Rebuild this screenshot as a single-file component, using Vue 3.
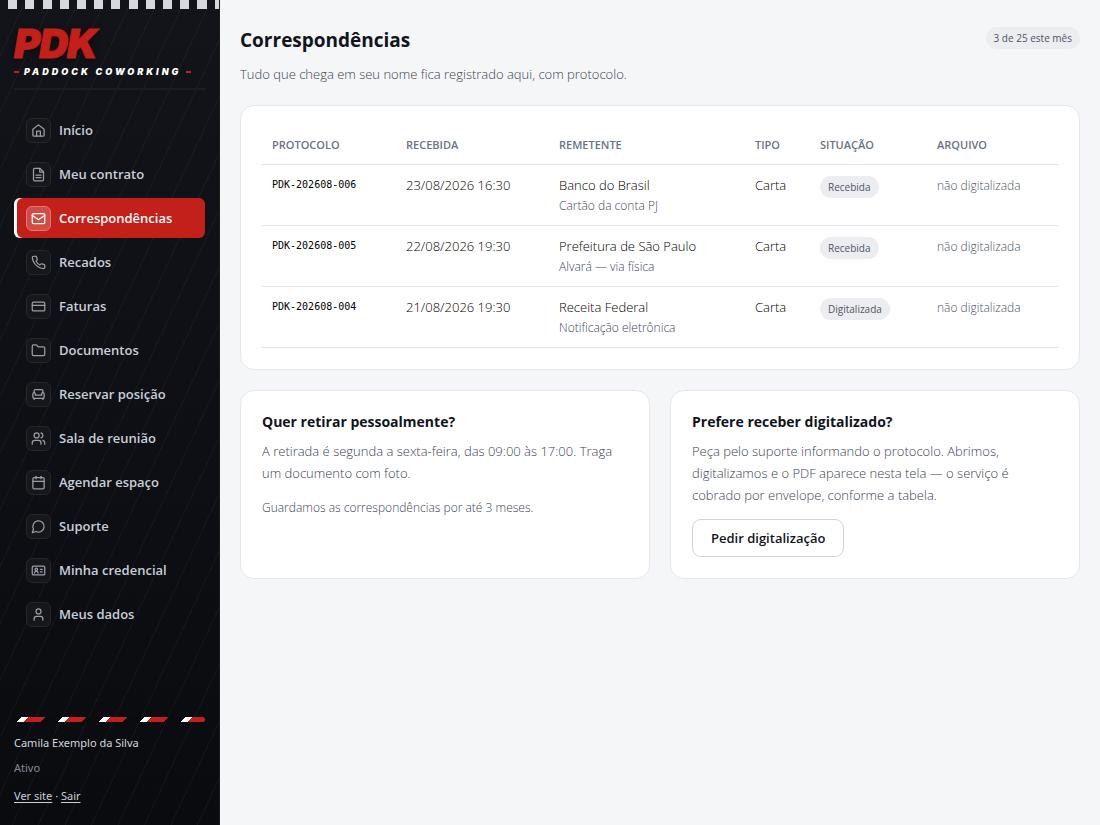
<script setup>
const nav = [
  { label: 'Início', d: ['m3 10 9-7 9 7v9a2 2 0 0 1-2 2H5a2 2 0 0 1-2-2z', 'M9 21v-8h6v8'] },
  { label: 'Meu contrato', d: ['M14 2H6a2 2 0 0 0-2 2v16a2 2 0 0 0 2 2h12a2 2 0 0 0 2-2V8z', 'M14 2v6h6', 'M8 13h8', 'M8 17h8'] },
  { label: 'Correspondências', active: true, d: ['M4 4h16a2 2 0 0 1 2 2v12a2 2 0 0 1-2 2H4a2 2 0 0 1-2-2V6a2 2 0 0 1 2-2z', 'm22 7-10 7L2 7'] },
  { label: 'Recados', d: ['M22 16.92v3a2 2 0 0 1-2.18 2 19.79 19.79 0 0 1-8.63-3.07 19.5 19.5 0 0 1-6-6 19.79 19.79 0 0 1-3.07-8.67A2 2 0 0 1 4.11 2h3a2 2 0 0 1 2 1.72c.13.96.36 1.9.7 2.81a2 2 0 0 1-.45 2.11L8.09 9.91a16 16 0 0 0 6 6l1.27-1.27a2 2 0 0 1 2.11-.45c.9.34 1.85.57 2.81.7A2 2 0 0 1 22 16.92z'] },
  { label: 'Faturas', d: ['M4 5h16a2 2 0 0 1 2 2v10a2 2 0 0 1-2 2H4a2 2 0 0 1-2-2V7a2 2 0 0 1 2-2z', 'M2 10h20'] },
  { label: 'Documentos', d: ['M20 20a2 2 0 0 0 2-2V8a2 2 0 0 0-2-2h-7.9a2 2 0 0 1-1.69-.9L9.6 3.9A2 2 0 0 0 7.93 3H4a2 2 0 0 0-2 2v13a2 2 0 0 0 2 2z'] },
  { label: 'Reservar posição', d: ['M19 9V6a2 2 0 0 0-2-2H7a2 2 0 0 0-2 2v3', 'M3 16a2 2 0 0 0 2 2h14a2 2 0 0 0 2-2v-5a2 2 0 0 0-4 0v2H7v-2a2 2 0 0 0-4 0z', 'M5 18v2', 'M19 18v2'] },
  { label: 'Sala de reunião', d: ['M16 21v-2a4 4 0 0 0-4-4H6a4 4 0 0 0-4 4v2', 'M13 7a4 4 0 1 1-8 0 4 4 0 0 1 8 0z', 'M22 21v-2a4 4 0 0 0-3-3.87', 'M16 3.13a4 4 0 0 1 0 7.75'] },
  { label: 'Agendar espaço', d: ['M5 4h14a2 2 0 0 1 2 2v14a2 2 0 0 1-2 2H5a2 2 0 0 1-2-2V6a2 2 0 0 1 2-2z', 'M16 2v4', 'M8 2v4', 'M3 10h18'] },
  { label: 'Suporte', d: ['M7.9 20A9 9 0 1 0 4 16.1L2 22z'] },
  { label: 'Minha credencial', d: ['M4 5h16a2 2 0 0 1 2 2v10a2 2 0 0 1-2 2H4a2 2 0 0 1-2-2V7a2 2 0 0 1 2-2z', 'M10.5 10a2 2 0 1 1-4 0 2 2 0 0 1 4 0z', 'M5.5 16c.5-2 1.5-3 3-3s2.500 1 3 3', 'M15 10h3', 'M15 14h3'] },
  { label: 'Meus dados', d: ['M19 21v-2a4 4 0 0 0-4-4H9a4 4 0 0 0-4 4v2', 'M16 7a4 4 0 1 1-8 0 4 4 0 0 1 8 0z'] },
]
const rows = [
  { id: 'PDK-202608-006', date: '23/08/2026 16:30', from: 'Banco do Brasil', note: 'Cartão da conta PJ', status: 'Recebida' },
  { id: 'PDK-202608-005', date: '22/08/2026 19:30', from: 'Prefeitura de São Paulo', note: 'Alvará — via física', status: 'Recebida' },
  { id: 'PDK-202608-004', date: '21/08/2026 19:30', from: 'Receita Federal', note: 'Notificação eletrônica', status: 'Digitalizada' },
]
</script>

<template>
  <div class="shell">
    <aside class="side">
      <div class="brand">
        <div class="logo">PDK</div>
        <div class="tagline">Paddock Coworking</div>
      </div>
      <nav class="nav">
        <a v-for="n in nav" :key="n.label" href="#" :class="{ active: n.active }">
          <span class="ico">
            <svg viewBox="0 0 24 24" aria-hidden="true"><path v-for="p in n.d" :key="p" :d="p" /></svg>
          </span>
          {{ n.label }}
        </a>
      </nav>
      <div class="foot">
        <div class="kerb"></div>
        <div class="user">Camila Exemplo da Silva</div>
        <div class="state">Ativo</div>
        <div class="links"><a href="#">Ver site</a> · <a href="#">Sair</a></div>
      </div>
    </aside>
    <main class="main">
      <header class="head">
        <div>
          <h1>Correspondências</h1>
          <p>Tudo que chega em seu nome fica registrado aqui, com protocolo.</p>
        </div>
        <span class="badge">3 de 25 este mês</span>
      </header>
      <section class="card">
        <table>
          <thead>
            <tr>
              <th class="c1">Protocolo</th>
              <th class="c2">Recebida</th>
              <th class="c3">Remetente</th>
              <th class="c4">Tipo</th>
              <th class="c5">Situação</th>
              <th>Arquivo</th>
            </tr>
          </thead>
          <tbody>
            <tr v-for="r in rows" :key="r.id">
              <td class="code"><code>{{ r.id }}</code></td>
              <td>{{ r.date }}</td>
              <td>{{ r.from }}<small>{{ r.note }}</small></td>
              <td>Carta</td>
              <td class="status"><span class="badge">{{ r.status }}</span></td>
              <td><span class="muted">não digitalizada</span></td>
            </tr>
          </tbody>
        </table>
      </section>
      <div class="pair">
        <section class="card">
          <h2>Quer retirar pessoalmente?</h2>
          <p>A retirada é segunda a sexta-feira, das 09:00 às 17:00. Traga um documento com foto.</p>
          <p class="hint">Guardamos as correspondências por até 3 meses.</p>
        </section>
        <section class="card">
          <h2>Prefere receber digitalizado?</h2>
          <p>Peça pelo suporte informando o protocolo. Abrimos, digitalizamos e o PDF aparece nesta tela — o serviço é cobrado por envelope, conforme a tabela.</p>
          <button type="button">Pedir digitalização</button>
        </section>
      </div>
    </main>
  </div>
</template>

<style>
body { background: #f4f6f8; }
</style>

<style scoped>
* { box-sizing: border-box; }
h1, h2, p { margin: 0; }
.shell {
  display: grid;
  grid-template-columns: 220px 1fr;
  min-height: 100vh;
  font-family: "Open Sans", "Noto Sans", sans-serif;
  font-size: 13px;
  color: #12141c;
}
.side {
  display: flex;
  flex-direction: column;
  padding: 0 14px 21px;
  border-right: 1px solid #1a1c21;
  color: #c9ced8;
  background:
    repeating-linear-gradient(90deg, transparent 0 3.7%, #d5d8de 3.7% 7.86%) 0 0 / 100% 9px no-repeat,
    repeating-linear-gradient(115deg, transparent 0 23px, rgba(255, 255, 255, 0.04) 23px 24px),
    linear-gradient(#12141a, #0a0b0f);
}
.brand {
  padding: 21px 0 11px;
  border-bottom: 2px solid #1b1d22;
  font-family: Inter, sans-serif;
  font-style: italic;
}
.logo {
  font-size: 40px;
  line-height: 46px;
  font-weight: 900;
  color: #c4201a;
  letter-spacing: -1px;
  -webkit-text-stroke: 1px #c4201a;
  text-shadow: 0 2px 6px rgba(0, 0, 0, 0.5);
}
.tagline {
  display: flex;
  align-items: center;
  gap: 5px;
  font-size: 9px;
  line-height: 10px;
  font-weight: 900;
  letter-spacing: 3px;
  text-transform: uppercase;
  color: #fff;
}
.tagline::before, .tagline::after { content: ""; width: 5px; height: 2px; background: #c4201a; }
.nav { display: grid; gap: 4px; padding-top: 20px; }
.nav a {
  display: flex;
  align-items: center;
  gap: 8px;
  height: 40px;
  padding: 0 12px;
  border-radius: 6px;
  font-weight: 600;
  color: #c9ced8;
  text-decoration: none;
}
.nav a.active { background: #c4201a; color: #fff; box-shadow: inset 3px 0 #fff; }
.ico {
  display: grid;
  place-items: center;
  width: 25px;
  height: 25px;
  border: 1px solid #25272c;
  border-radius: 6px;
  background: #15171b;
  color: #9a9ea8;
}
.active .ico { background: #d04c47; border-color: #dd7a76; color: #fff; }
svg { width: 15px; height: 15px; fill: none; stroke: currentColor; stroke-width: 2; stroke-linecap: round; stroke-linejoin: round; }
.foot { margin-top: auto; font-family: "Noto Sans", sans-serif; font-size: 11px; line-height: 16px; }
.kerb {
  height: 5px;
  border-radius: 3px;
  background: repeating-linear-gradient(135deg, #0a0b0f 0 5px, #fff 5px 10px, #c4201a 10px 22px, #0a0b0f 22px 29px);
}
.user { margin-top: 13px; color: #d5d8de; }
.state { margin: 9px 0 12px; color: #858b98; }
.foot a { color: #c9ced8; text-underline-offset: 2px; }
.main { padding: 26px 20px 20px; min-width: 0; }
.head { display: flex; justify-content: space-between; align-items: flex-start; margin-bottom: 20px; }
.head p { margin-top: 9px; }
.head .badge { margin-top: 1px; }
h1 { font-size: 19px; line-height: 28px; font-weight: 700; }
h2 { font-size: 14px; line-height: 20px; font-weight: 700; }
p { font-size: 13px; line-height: 22px; font-weight: 300; color: #3a4352; }
.card { padding: 21px; border: 1px solid #e5e7ec; border-radius: 14px; background: #fff; }
table { width: 100%; border-collapse: collapse; table-layout: fixed; }
th, td { padding: 10px 10px 8px; text-align: left; vertical-align: top; border-bottom: 1px solid #e2e4e9; line-height: 20px; }
td { font-weight: 300; color: #000; }
th { padding: 8px 10px 9px; font-size: 11px; font-weight: 600; text-transform: uppercase; color: #6b7382; }
.c1 { width: 134px; }
.c2 { width: 153px; }
.c3 { width: 196px; }
.c4 { width: 65px; }
.c5 { width: 117px; }
td.code { padding-top: 8px; }
td.status { padding-top: 11px; }
code { font-family: "DejaVu Sans Mono", monospace; font-size: 10px; }
small { display: block; font-size: 12px; line-height: 22px; color: #3f4858; }
.muted { font-size: 12px; color: #4c5462; }
.badge {
  display: inline-block;
  padding: 0 8px;
  border-radius: 11px;
  background: #ecedf1;
  color: #4c5565;
  font-size: 10px;
  font-weight: 400;
  line-height: 22px;
}
.pair { display: grid; grid-template-columns: 1fr 1fr; gap: 20px; margin-top: 20px; }
.pair p { margin-top: 8px; }
.pair .hint { margin-top: 13px; font-size: 12px; }
button {
  margin-top: 13px;
  padding: 0 18px;
  height: 38px;
  border: 1px solid #cfd3dc;
  border-radius: 9px;
  background: #fff;
  font: 600 13px "Open Sans", sans-serif;
  color: #12141c;
}
</style>
